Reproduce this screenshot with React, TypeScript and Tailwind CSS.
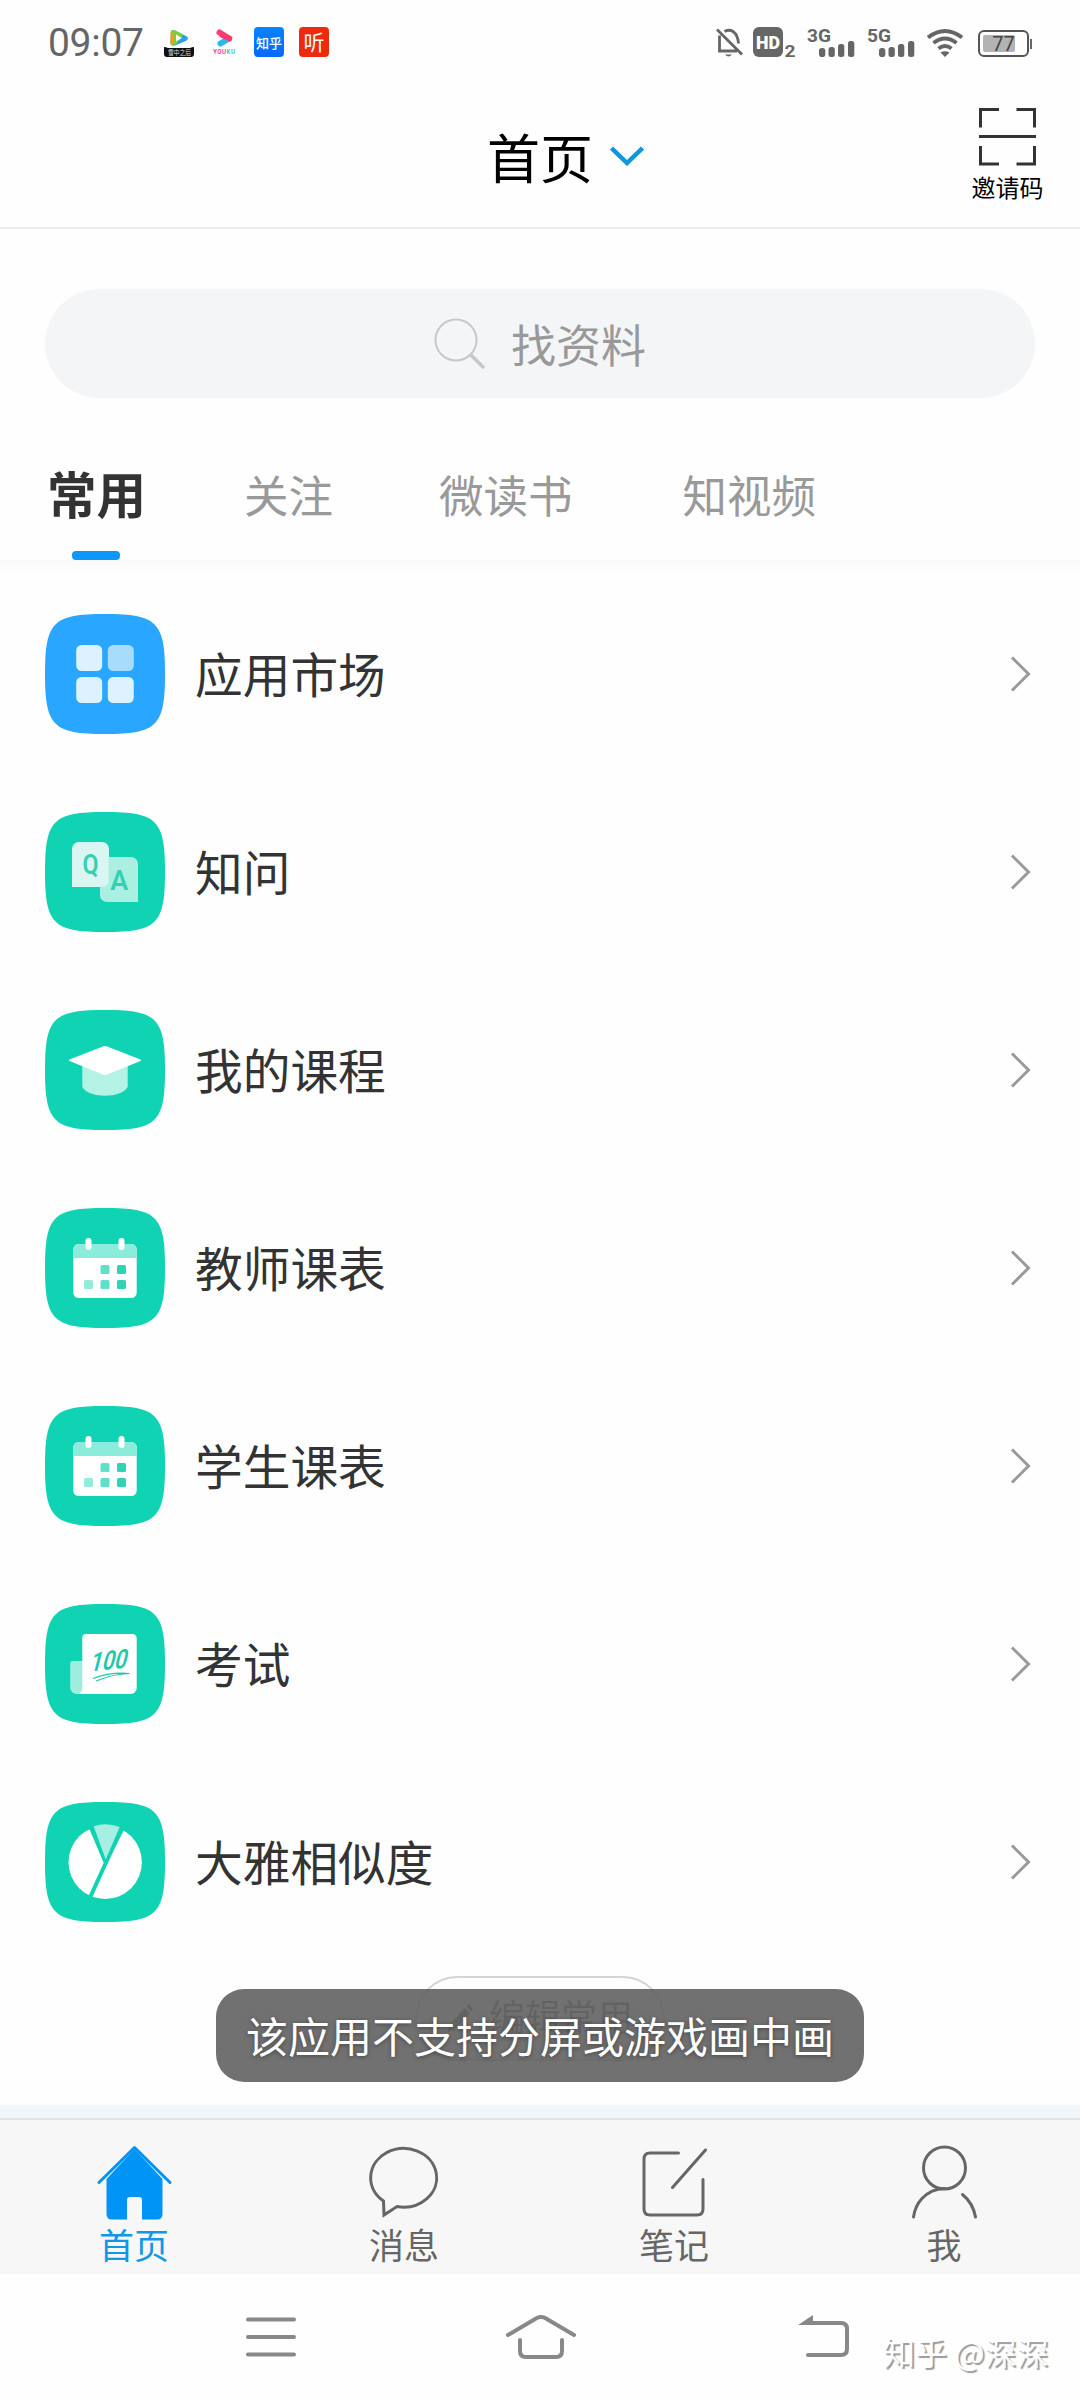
import type { ReactNode } from 'react';

const tabs = [
    { label: '关注', className: 'ml-[98px]' },
    { label: '微读书', className: 'ml-[106px]' },
    { label: '知视频', className: 'ml-[110px]' },
];

function Tile({ color = '#10d3b4', children }: { color?: string; children: ReactNode }) {
    return (
        <svg viewBox="0 0 120 120" className="w-[120px] h-[120px] shrink-0">
            <path d="M0 60C0 8 8 0 60 0S120 8 120 60 112 120 60 120 0 112 0 60Z" fill={color} />
            {children}
        </svg>
    );
}

function MarketIcon() {
    return (
        <Tile color="#29a6ff">
            <rect x="31.2" y="31" width="26" height="26" rx="5.5" fill="#dcf2ff" />
            <rect x="62.8" y="31" width="26" height="26" rx="5.5" fill="#a8dcfd" />
            <rect x="31.2" y="63" width="26" height="26" rx="5.5" fill="#dcf2ff" />
            <rect x="62.8" y="63" width="26" height="26" rx="5.5" fill="#dcf2ff" />
        </Tile>
    );
}

function QaIcon() {
    return (
        <Tile>
            <path d="M63 45H86a7 7 0 0 1 7 7V90H62a7 7 0 0 1-7-7V53a8 8 0 0 1 8-8Z" fill="#aaefe2" />
            <path d="M34 30H57a7 7 0 0 1 7 7V68a7 7 0 0 1-7 7H27V37a7 7 0 0 1 7-7Z" fill="#d9f7f0" />
            <path d="M55 75H57a7 7 0 0 0 7-7V45H63V68a6 6 0 0 1-6 6Z" fill="#c4f4ea" />
            <g fill="#35d0b1" className="font-[Roboto]" fontSize="28" fontWeight="600" textAnchor="middle">
                <text x="45.5" y="62" textLength="16" lengthAdjust="spacingAndGlyphs">Q</text>
                <text x="74.3" y="77.5" textLength="18" lengthAdjust="spacingAndGlyphs">A</text>
            </g>
        </Tile>
    );
}

function CourseIcon() {
    return (
        <Tile>
            <path d="M37.3 54H82.7V77C79 83 70 85.7 60 85.7S41 83 37.3 77Z" fill="#b5f2e6" />
            <path d="M58.5 36.3Q60 35.7 61.5 36.3L95.5 49.5Q97 50.3 95.5 51L61.5 64.8Q60 65.4 58.5 64.8L24.5 51Q23 50.3 24.5 49.5Z" fill="#fff" />
        </Tile>
    );
}

function CalendarIcon() {
    return (
        <Tile>
            <rect x="28.3" y="36" width="63.4" height="54" rx="5.5" fill="#fff" />
            <path d="M28.3 50V41.5A5.5 5.5 0 0 1 33.8 36H86.2A5.5 5.5 0 0 1 91.7 41.5V50Z" fill="#8aecda" />
            <rect x="40.5" y="30" width="6" height="12" rx="3" fill="#fff" />
            <rect x="73.5" y="30" width="6" height="12" rx="3" fill="#fff" />
            <rect x="55.5" y="57" width="9" height="9" rx="1.5" fill="#5ee0c9" />
            <rect x="72" y="57" width="9" height="9" rx="1.5" fill="#2fd3b6" />
            <rect x="39" y="72" width="9" height="9" rx="1.5" fill="#93ebda" />
            <rect x="55.5" y="72" width="9" height="9" rx="1.5" fill="#5ee0c9" />
            <rect x="72" y="72" width="9" height="9" rx="1.5" fill="#2fd3b6" />
        </Tile>
    );
}

function ExamIcon() {
    return (
        <Tile>
            <path d="M27.5 57H38V84A6 6 0 0 1 31.5 90A6.3 6.3 0 0 1 25.2 84V59.3A2.3 2.3 0 0 1 27.5 57Z" fill="#9eedde" />
            <path d="M41 30H87.5A4.2 4.2 0 0 1 91.7 34.2V84A6 6 0 0 1 85.700 90H31.5A6 6 0 0 0 37.3 84V33.7A3.7 3.7 0 0 1 41 30Z" fill="#fff" />
            <text
                transform="translate(44 67.5) rotate(-6) skewX(-20)"
                fill="#1dc9ab"
                className="font-[Roboto]"
                fontSize="26"
                fontWeight="600"
                textLength="37"
                lengthAdjust="spacingAndGlyphs"
            >
                100
            </text>
            <path d="M48 74.5Q65 68 84.500 69.500Q68 70 51 77" fill="none" stroke="#1dc9ab" strokeWidth="1.2" />
        </Tile>
    );
}

function PieIcon() {
    return (
        <Tile>
            <circle cx="60.2" cy="60.3" r="36.7" fill="#fff" />
            <path d="M60.7 64L42 18H84Z" fill="#10d3b4" />
            <path d="M44 21L60.5 60M79 21L45.5 94.5" stroke="#10d3b4" strokeWidth="4" />
            <path d="M60.7 57.5L48.7 24.3Q61 20 74.7 24.9Z" fill="#a6efe2" />
        </Tile>
    );
}

const rows = [
    { label: '应用市场', icon: <MarketIcon /> },
    { label: '知问', icon: <QaIcon /> },
    { label: '我的课程', icon: <CourseIcon /> },
    { label: '教师课表', icon: <CalendarIcon /> },
    { label: '学生课表', icon: <CalendarIcon /> },
    { label: '考试', icon: <ExamIcon /> },
    { label: '大雅相似度', icon: <PieIcon /> },
];

function Signal({ label }: { label: string }) {
    return (
        <svg viewBox="0 0 48 30" className="w-[48px] h-[30px] overflow-visible" fill="#666">
            <text x="0" y="15" className="font-[Roboto]" fontSize="19" fontWeight="700" textLength="24" lengthAdjust="spacingAndGlyphs">
                {label}
            </text>
            <rect x="12" y="21" width="6.3" height="9" rx="2.8" />
            <rect x="21.5" y="20" width="6.3" height="10" rx="2.5" />
            <rect x="31" y="17" width="6.3" height="13" rx="2.5" />
            <rect x="41" y="14" width="6.3" height="16" rx="2.5" />
        </svg>
    );
}

function StatusBar() {
    return (
        <div className="flex items-start h-[80px] pt-[27px] pl-[48px]">
            <span className="w-[116px] pt-px text-[39px] leading-[30px] tracking-[-0.3px] text-[#666] font-[Roboto]">09:07</span>
            <div className="flex gap-[15px]">
                <svg viewBox="0 0 30 30" className="w-[30px] h-[30px]">
                    <path d="M7 4Q8 2.5 11 3.5L22 9Q26 11 22 14L11 18.5Q7 19.5 6.5 16Z" fill="#2ba3e8" />
                    <path d="M7 4Q8 2.5 11 3.5L19 7.5L12 17.5Q7 19.5 6.5 16Z" fill="#7ad03a" />
                    <path d="M6.5 5L10 7V17L7.5 18Q6.5 17 6.5 16Z" fill="#f59a23" />
                    <path d="M12 7.5L18 11L12 14.5Z" fill="#fff" />
                    <path d="M0 20Q2 20 4 21H26Q28 20 30 20V27Q30 30 27 30H3Q0 30 0 27Z" fill="#111" />
                    <text x="4" y="28.2" fontSize="7" fill="#ddd" textLength="23" lengthAdjust="spacingAndGlyphs">雪中之后</text>
                </svg>
                <svg viewBox="0 0 30 30" className="w-[30px] h-[30px]">
                    <path d="M10.5 5.5L20 11.5" stroke="#ff3b7c" strokeWidth="6" strokeLinecap="round" />
                    <path d="M11.5 16.5L20 11.5" stroke="#28b9f2" strokeWidth="6" strokeLinecap="round" />
                    <path d="M13 8L20.5 11.5" stroke="#ff3b6c" strokeWidth="5.5" strokeLinecap="round" />
                    <text x="4" y="27" fontSize="5.5" fontWeight="700" className="font-[Inter]" textLength="22">
                        <tspan fill="#e0408a">YOU</tspan>
                        <tspan fill="#28b9f2">KU</tspan>
                    </text>
                </svg>
                <div className="flex items-center justify-center w-[30px] h-[30px] rounded-[4px] bg-linear-to-b from-[#0a84ff] to-[#0a66ff] text-white text-[13px] leading-none font-medium">
                    知乎
                </div>
                <div className="flex items-center justify-center w-[30px] h-[30px] pb-[2px] rounded-[4px] bg-[#ee2a0c] text-white text-[21px] leading-none">
                    听
                </div>
            </div>

            <div className="flex items-start ml-[386px]">
                <svg viewBox="0 0 28 30" className="w-[28px] h-[30px]" fill="none" stroke="#666" strokeWidth="2.8">
                    <path d="M2 2.5L27 27.5M4.5 8.5V24H22M9.5 4.5Q14 2 18 4.5Q23 8 23.5 16.5" />
                    <path d="M10 27.5H17Q13.5 31.5 10 27.5Z" fill="#666" stroke="none" />
                </svg>
                <svg viewBox="0 0 44 30" className="w-[44px] h-[30px] ml-[10px] overflow-visible">
                    <rect width="30" height="30" rx="6" fill="#666" />
                    <g className="font-[Roboto]">
                        <text x="3" y="22" fontSize="19" fontWeight="900" fill="#fff" textLength="24" lengthAdjust="spacingAndGlyphs">HD</text>
                        <text x="31.5" y="29.500" fontSize="16" fontWeight="700" fill="#666" textLength="11" lengthAdjust="spacingAndGlyphs">2</text>
                    </g>
                </svg>
                <div className="flex gap-[12px] ml-[10px]">
                    <Signal label="3G" />
                    <Signal label="5G" />
                </div>
                <svg viewBox="0 0 36 28" className="w-[36px] h-[28px] ml-[12px] mt-[2px]" fill="none" stroke="#666" strokeWidth="3.8">
                    <path d="M1 8.5Q18-4.5 35 8.5M6.5 14Q18 5 29.5 14M11.5 19.500Q18 14.500 24.500 19.500" />
                    <path d="M13.500 23.500Q18 21 22.500 23.500L18 28Z" fill="#666" stroke="none" />
                </svg>
                <div className="flex items-center ml-[15px] mt-[3px]">
                    <div className="w-[51px] h-[27px] rounded-[6px] border-2 border-[#555] p-[3px]">
                        <div className="w-[32px] h-[17px] rounded-[2px] bg-[#b3b3b3]">
                            <div className="w-[41px] text-center text-[20px] leading-[18px] text-[#444] font-[Roboto]">77</div>
                        </div>
                    </div>
                    <div className="w-[2px] h-[10px] ml-px bg-[#666]" />
                </div>
            </div>
        </div>
    );
}

function Header() {
    return (
        <header className="flex h-[149px] border-b-2 border-[#ececec] pl-[487px]">
            <h1 className="w-[123px] pt-[46px] text-[53px] leading-[60px] text-black">首页</h1>
            <svg viewBox="0 0 34 20" className="w-[34px] h-[20px] mt-[66px]">
                <path d="M1.5 2L17 17L32.5 2" fill="none" stroke="#1296db" strokeWidth="4.5" />
            </svg>
            <div className="flex flex-col items-center ml-[327px] w-[73px] pt-[28px]">
                <svg viewBox="0 0 57 58" className="w-[57px] h-[58px]" fill="none" stroke="#333" strokeWidth="3">
                    <path d="M20 1.5H1.5V19.5M37.5 1.5H55.5V19.5M1.5 38V56H20M55.5 38V56H37.5M0 28.5H57" />
                </svg>
                <span className="mt-[7px] text-[24px] leading-[28px] whitespace-nowrap text-black">邀请码</span>
            </div>
        </header>
    );
}

const navItems = [
    {
        label: '首页',
        icon: (
            <>
                <path d="M10.5 34V69Q10.5 74.5 16 74.5H31V55Q31 52 34 52H43Q46 52 46 55V74.5H61Q66.5 74.5 66.5 69V34L38.5 4Z" fill="#0094f7" />
                <path d="M3 37.5L38.5 2.5L74 37.5" stroke="#0094f7" strokeWidth="3" strokeLinecap="round" strokeLinejoin="round" />
            </>
        ),
    },
    {
        label: '消息',
        icon: <path d="M17.5 56A33 29.3 0 1 1 31 61.500L18 70Z" />,
    },
    {
        label: '笔记',
        icon: <path d="M42.5 8H14Q8 8 8 14V64Q8 70 14 70H61Q67 70 67 64V34.5M69.5 5L36.5 42.5" strokeLinecap="round" />,
    },
    {
        label: '我',
        icon: (
            <>
                <circle cx="38.5" cy="23" r="21" />
                <path d="M7.5 72Q9 61 16 53.5Q25 44 38.5 43.5M56.5 49.5Q67 58 69.5 72" strokeLinecap="round" />
            </>
        ),
    },
];

function BottomTabs() {
    return (
        <nav className="flex h-[156px] border-t-2 border-[#e3e3e3] bg-[#f7f7f7]">
            {navItems.map((item, i) => (
                <div key={item.label} className="flex flex-col items-center w-[270px] pt-[25px] pr-[2px]">
                    <svg viewBox="0 0 77 76" className="w-[77px] h-[76px] overflow-visible" fill="none" stroke={i === 0 ? 'none' : '#666'} strokeWidth="3">
                        {item.icon}
                    </svg>
                    <span className={`mt-px text-[35px] leading-[44px] ${i === 0 ? 'text-[#1296e8]' : 'text-[#666]'}`}>
                        {item.label}
                    </span>
                </div>
            ))}
        </nav>
    );
}

function SystemNav() {
    return (
        <div className="flex h-[126px] pt-[41px] pl-[246px]">
            <svg viewBox="0 0 50 44" className="w-[50px] h-[44px]" stroke="#888" strokeWidth="4" strokeLinecap="round">
                <path d="M2 4.5H48M2 22H48M2 39.500H48" />
            </svg>
            <svg viewBox="0 0 70 44" className="w-[70px] h-[44px] ml-[210px]" fill="none" stroke="#888" strokeWidth="4" strokeLinecap="round">
                <path d="M2 20L30 3.5Q35 .5 40 3.5L68 20M14 25V36Q14 42 20 42H50Q56 42 56 36V25" />
            </svg>
            <svg viewBox="0 0 52 44" className="w-[52px] h-[44px] ml-[222px]" fill="none" stroke="#888" strokeWidth="4" strokeLinecap="round">
                <path d="M12 8H43Q49 8 49 14V34Q49 40 43 40H10" />
                <path d="M0 10L15 0V10Z" fill="#888" stroke="none" />
            </svg>
            <span className="ml-[33px] mt-[16px] text-[32px] leading-[40px] whitespace-nowrap text-white [text-shadow:2px_2px_1px_#999]">
                知乎 @深深
            </span>
        </div>
    );
}

export default function App() {
    return (
        <div className="relative w-[1080px] h-[2400px] overflow-hidden bg-[#fefefe] font-['Noto_Sans_CJK_SC',sans-serif]">
            <StatusBar />
            <Header />

            {/* Search */}
            <div className="flex items-center h-[109px] mx-[45px] mt-[60px] pl-[389px] rounded-full bg-[#f4f5f7]">
                <svg viewBox="0 0 52 52" className="w-[52px] h-[52px]" fill="none" stroke="#c8c8c8">
                    <circle cx="22" cy="22" r="20.5" strokeWidth="2" />
                    <path d="M37 37L50 50" strokeWidth="3.5" />
                </svg>
                <span className="ml-[25px] text-[45px] leading-[60px] text-[#999]">找资料</span>
            </div>

            {/* Category tabs */}
            <div className="flex h-[162px] pl-[47px] pt-[60px]">
                <div className="flex flex-col items-center w-[99px]">
                    <span className="text-[49.5px] leading-[70px] font-bold text-[#333]">常用</span>
                    <div className="mt-[23px] mr-[2px] w-[48px] h-[9px] rounded-[4px] bg-[#0c98fb]" />
                </div>
                {tabs.map((tab) => (
                    <span key={tab.label} className={`pt-px text-[44.5px] leading-[70px] text-[#999] ${tab.className}`}>
                        {tab.label}
                    </span>
                ))}
            </div>
            <div className="h-[15px] bg-linear-to-b from-[#f9f9f9] to-[#fefefe]" />

            {/* App list */}
            <ul>
                {rows.map((row) => (
                    <li key={row.label} className="flex items-center h-[198px] pl-[45px] pr-[49px]">
                        {row.icon}
                        <span className="ml-[30px] mb-[2px] text-[47.7px] leading-[60px] text-[#333]">{row.label}</span>
                        <svg viewBox="0 0 21 36" className="ml-auto w-[21px] h-[36px]">
                            <path d="M2 1.5L18.5 18L2 34.5" fill="none" stroke="#999" strokeWidth="3" />
                        </svg>
                    </li>
                ))}
            </ul>

            <div className="h-[144px] pt-[15px]">
                <div className="flex items-center mx-auto w-[250px] h-[85px] pl-[30px] rounded-full border-2 border-[#d4d4d4]">
                    <svg viewBox="0 0 26 30" className="w-[26px] h-[30px]" fill="#666">
                        <path d="M0 29L3 20L18 4L23 9L8 25ZM19.5 2.5L21.5 0L26 5L24 7.5Z" />
                    </svg>
                    <span className="ml-[16px] mb-[8px] text-[36px] leading-[48px] text-[#666]">编辑常用</span>
                </div>
            </div>
            <div className="h-[13px] bg-[#f3f6f9]" />

            <BottomTabs />
            <SystemNav />

            {/* Toast */}
            <div className="absolute left-[216px] top-[1989px] flex items-center justify-center w-[648px] h-[93px] pb-[2px] rounded-[28px] bg-[#636363]/91">
                <span className="text-[42px] leading-[60px] whitespace-nowrap text-white [text-shadow:0_1px_4px_#444]">
                    该应用不支持分屏或游戏画中画
                </span>
            </div>
        </div>
    );
}
